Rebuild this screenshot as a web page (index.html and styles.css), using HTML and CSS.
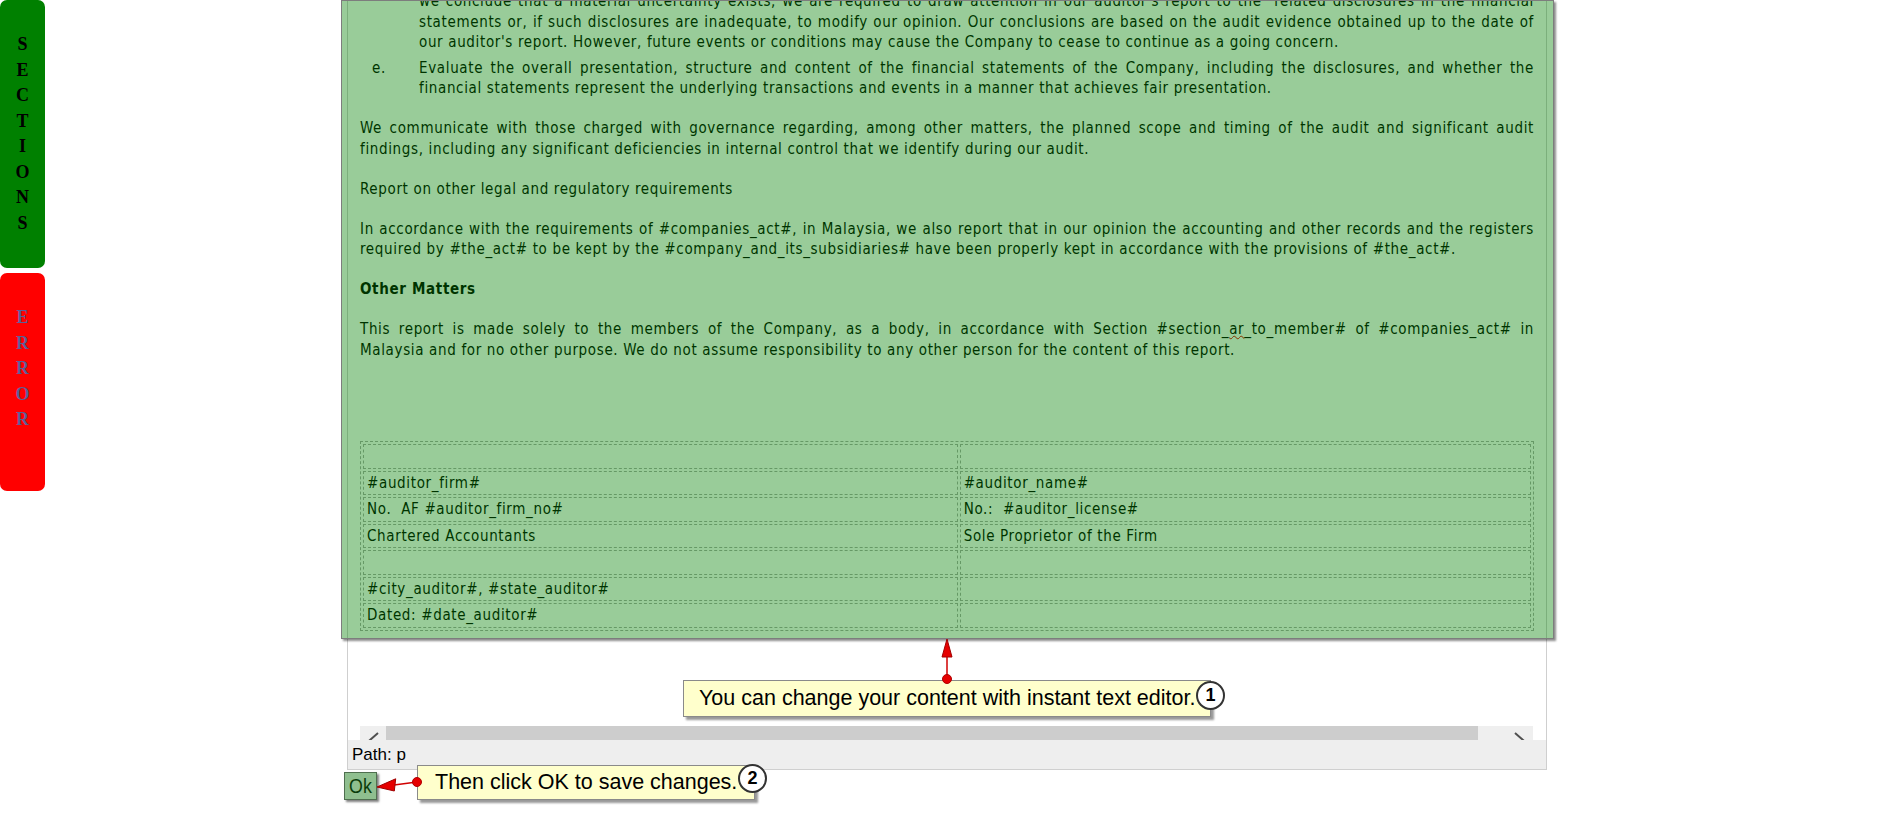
FILE: index.html
```html
<!doctype html>
<html lang="en">
<head>
    <meta charset="utf-8">
    <title>Report editor</title>
    <link rel="stylesheet" href="styles.css">
</head>
<body>

<div class="screen">
    <!-- Боковые вкладки -->
    <nav class="side-tabs">
        <a class="side-tab side-tab--sections">S<br>E<br>C<br>T<br>I<br>O<br>N<br>S</a>
        <a class="side-tab side-tab--error">E<br>R<br>R<br>O<br>R</a>
    </nav>

    <div class="editor">
        <div class="editor-frame">
            <div class="editor-body">
                <div class="doc">
                    <ol class="doc-list">
                        <li class="doc-item">
                            <span class="doc-mark"></span>
                            <div class="doc-text">we conclude that a material uncertainty exists, we are required to draw attention in our auditor's report to the &nbsp;related disclosures in the financial statements or, if such disclosures are inadequate, to modify our opinion. Our conclusions are based on the audit evidence obtained up to the date of our auditor's report. However, future events or conditions may cause the Company to cease to continue as a going concern.</div>
                        </li>
                        <li class="doc-item">
                            <span class="doc-mark">e.</span>
                            <div class="doc-text">Evaluate the overall presentation, structure and content of the financial statements of the Company, including the disclosures, and whether the financial statements represent the underlying transactions and events in a manner that achieves fair presentation.</div>
                        </li>
                    </ol>

                    <p>We communicate with those charged with governance regarding, among other matters, the planned scope and timing of the audit and significant audit findings, including any significant deficiencies in internal control that we identify during our audit.</p>

                    <p>Report on other legal and regulatory requirements</p>

                    <p>In accordance with the requirements of #companies_act#, in Malaysia, we also report that in our opinion the accounting and other records and the registers required by #the_act# to be kept by the #company_and_its_subsidiaries# have been properly kept in accordance with the provisions of #the_act#.</p>

                    <p><strong>Other Matters</strong></p>

                    <p><span class="doc-line">This report is made solely to the members of the Company, as a body, in accordance with Section #section_<span class="spell">ar</span>_to_member# of #companies_act# in</span> Malaysia and for no other purpose. We do not assume responsibility to any other person for the content of this report.</p>

                    <table class="sign-table">
                        <tr><td class="sign-left">&nbsp;</td><td>&nbsp;</td></tr>
                        <tr><td>#auditor_firm#</td><td>#auditor_name#</td></tr>
                        <tr><td>No.&nbsp; AF #auditor_firm_no#</td><td>No.:&nbsp; #auditor_license#</td></tr>
                        <tr><td>Chartered Accountants</td><td>Sole Proprietor of the Firm</td></tr>
                        <tr><td>&nbsp;</td><td>&nbsp;</td></tr>
                        <tr><td>#city_auditor#, #state_auditor#</td><td>&nbsp;</td></tr>
                        <tr><td>Dated: #date_auditor#</td><td>&nbsp;</td></tr>
                    </table>
                </div>
            </div>

            <!-- Горизонтальная прокрутка (видна частично) -->
            <div class="hscroll">
                <span class="hscroll-btn">
                    <svg width="26" height="24" viewBox="0 0 26 24"><polyline points="18,7 10,14 18,21" fill="none" stroke="#505050" stroke-width="2"/></svg>
                </span>
                <span class="hscroll-thumb"></span>
                <span class="hscroll-btn hscroll-btn--right">
                    <svg width="55" height="24" viewBox="0 0 55 24"><polyline points="37,7 45,14 37,21" fill="none" stroke="#505050" stroke-width="2"/></svg>
                </span>
            </div>

            <div class="path-bar">Path: p</div>
        </div>

        <div class="editor-foot">
            <button class="ok-btn" type="button"><span>Ok</span></button>
        </div>

        <!-- Подсветка редактируемого блока -->
        <div class="highlight"></div>

        <!-- Подсказки -->
        <div class="hint hint--one">
            You can change your content with instant text editor.
            <span class="hint-num">1</span>
        </div>
        <svg class="hint-arrow hint-arrow--one" width="20" height="50" viewBox="0 0 20 50">
            <line x1="10" y1="20" x2="10" y2="43" stroke="#d00000" stroke-width="1.5"/>
            <polygon points="10,3 15,21 5,21" fill="#e60000" stroke="#a00000" stroke-width="1"/>
            <circle cx="10" cy="43" r="4.5" fill="#e60000" stroke="#b00000" stroke-width="1"/>
        </svg>

        <div class="hint hint--two">
            Then click OK to save changes.
            <span class="hint-num">2</span>
        </div>
        <svg class="hint-arrow hint-arrow--two" width="52" height="24" viewBox="0 0 52 24">
            <line x1="22" y1="13" x2="45" y2="10" stroke="#d00000" stroke-width="1.5"/>
            <polygon points="5,15 23.7,6.8 22.3,19" fill="#e60000" stroke="#a00000" stroke-width="1"/>
            <circle cx="45" cy="10" r="4.5" fill="#e60000" stroke="#b00000" stroke-width="1"/>
        </svg>
    </div>
</div>

</body>
</html>
```

FILE: styles.css
```css
/* Общие стили страницы */
body {
    margin: 0;
    background: #fff;
    overflow: hidden;
}

.screen {
    display: flex;
    align-items: flex-start;
    height: 833px;
}

/* Боковые вкладки SECTIONS / ERROR */
.side-tabs {
    display: flex;
    flex-direction: column;
    gap: 5px;
    width: 45px;
    flex-shrink: 0;
}

.side-tab {
    display: block;
    border-radius: 7px;
    font: bold 18px/25.5px "Liberation Serif", "Times New Roman", serif;
    text-align: center;
    cursor: pointer;
}

.side-tab--sections {
    height: 268px;
    box-sizing: border-box;
    padding-top: 32px;
    background: #008000;
    color: #000;
}

.side-tab--error {
    height: 218px;
    box-sizing: border-box;
    padding-top: 32px;
    background: #ff0000;
    color: #5b5f97;
}

/* Редактор */
.editor {
    position: relative;
    width: 1200px;
    margin-left: 302px;
    flex-shrink: 0;
}

.editor-frame {
    border: 1px solid #cfcfcf;
    border-top: 0;
    background: #fff;
}

.editor-body {
    height: 726px;
    overflow: hidden;
}

.doc {
    margin-top: -9px;
    padding: 0 12px;
    font-family: Tahoma, "DejaVu Sans Condensed", "DejaVu Sans", sans-serif;
    font-size: 15px;
    line-height: 20.5px;
    letter-spacing: 0.65px;
    color: #000;
    text-align: justify;
}

.doc p {
    margin: 19.5px 0;
}

/* Строка, растянутая по ширине, с принудительным переносом после неё */
.doc-line {
    display: block;
    text-align-last: justify;
}

.doc-list {
    list-style: none;
    margin: 0 0 19.5px;
    padding: 0;
}

.doc-item {
    display: flex;
}

.doc-item + .doc-item {
    margin-top: 5px;
}

.doc-mark {
    flex: 0 0 59px;
    box-sizing: border-box;
    padding-left: 12px;
}

.doc-text {
    flex: 1;
}

.spell {
    text-decoration: underline wavy #e00000;
    text-decoration-thickness: 1px;
}

/* Таблица подписей */
.sign-table {
    width: 100%;
    margin-top: 81px;
    border: 1px dashed #aaa;
    border-spacing: 2px;
    text-align: left;
}

.sign-table td {
    padding: 1px 3px;
    border: 1px dashed #aaa;
    line-height: 20.5px;
}

.sign-left {
    width: 51%;
}

/* Горизонтальный скролл */
.hscroll {
    display: flex;
    height: 14px;
    margin: 0 13px 0 12px;
    overflow: hidden;
    background: #efefef;
}

.hscroll-btn {
    width: 26px;
    flex-shrink: 0;
}

.hscroll-btn--right {
    width: 55px;
}

.hscroll-thumb {
    flex: 1;
    background: #cdcdcd;
}

.path-bar {
    height: 29px;
    padding-left: 4px;
    background: #eee;
    font: 17px/29px "Liberation Sans", Arial, sans-serif;
    color: #000;
}

/* Кнопка Ok */
.editor-foot {
    margin: 2px 0 0 -3px;
}

.ok-btn {
    display: block;
    width: 33px;
    height: 28px;
    padding: 0;
    border: 1px solid #4f6f4f;
    background: #8fbf8f;
    box-shadow: 2px 2px 2px rgba(0, 0, 0, 0.5);
    font: 21px/26px "Liberation Sans", Arial, sans-serif;
    color: #0b3d0b;
    cursor: pointer;
}

.ok-btn span {
    display: inline-block;
    transform: scaleX(0.85);
}

/* Полупрозрачная подсветка поверх текста */
.highlight {
    position: absolute;
    left: -6px;
    top: 0;
    width: 1213px;
    height: 639px;
    box-sizing: border-box;
    border: 1px solid #7d7d7d;
    background: rgba(0, 128, 0, 0.4);
    box-shadow: 2px 2px 2px rgba(0, 0, 0, 0.45);
    pointer-events: none;
}

/* Подсказки */
.hint {
    position: absolute;
    box-sizing: border-box;
    border: 1px solid #8a8a8a;
    background: #ffffcc;
    box-shadow: 3px 3px 2px rgba(0, 0, 0, 0.4);
    font: 21.5px "Liberation Sans", Arial, sans-serif;
    color: #000;
    white-space: nowrap;
}

.hint--one {
    left: 336px;
    top: 680px;
    width: 528px;
    height: 37px;
    padding-left: 15px;
    line-height: 34px;
}

.hint--two {
    left: 70px;
    top: 765px;
    width: 338px;
    height: 35px;
    padding-left: 17px;
    line-height: 33px;
}

.hint-num {
    position: absolute;
    top: 0;
    right: -15px;
    width: 29px;
    height: 29px;
    box-sizing: border-box;
    border: 2px solid #333;
    border-radius: 50%;
    background: #fff;
    font: bold 18px/25px "Liberation Sans", Arial, sans-serif;
    text-align: center;
}

.hint--two .hint-num {
    top: -2px;
    right: -13px;
}

.hint-arrow {
    position: absolute;
}

.hint-arrow--one {
    left: 590px;
    top: 636px;
}

.hint-arrow--two {
    left: 25px;
    top: 772px;
}
```
